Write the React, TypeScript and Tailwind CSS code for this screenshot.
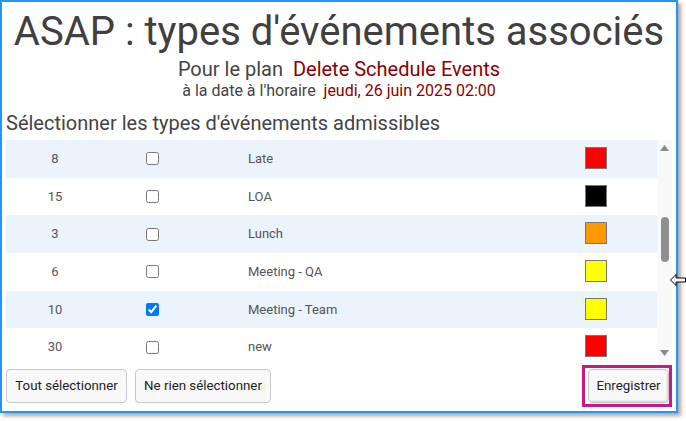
import React from 'react'

const ROWS = [
  { id: 8, name: 'Late', color: '#ff0000', checked: false },
  { id: 15, name: 'LOA', color: '#000000', checked: false },
  { id: 3, name: 'Lunch', color: '#ff9900', checked: false },
  { id: 6, name: 'Meeting - QA', color: '#ffff00', checked: false },
  { id: 10, name: 'Meeting - Team', color: '#ffff00', checked: true },
  { id: 30, name: 'new', color: '#ff0000', checked: false },
]

export default function App() {
  return (
    <div className="relative w-[686px] h-[421px] bg-white overflow-hidden" style={{ fontFamily: 'Roboto, "Liberation Sans", sans-serif' }}>
      <div className="w-[678px] h-[413px] border-2 border-[#2196f3] bg-white shadow-[3px_3px_4px_rgba(0,0,0,0.35)] flex flex-col pt-2 px-1">
        {/* Header */}
        <h1 className="text-[40px] leading-[44px] text-center text-[#404040] whitespace-nowrap">ASAP : types d'événements associés</h1>
        <p className="mt-[3px] text-[20px] leading-[24px] text-center text-[#444] whitespace-nowrap">
          Pour le plan&nbsp; <span className="text-[#8b0000]">Delete Schedule Events</span>
        </p>
        <p className="text-[16px] leading-[20px] text-center text-[#444] whitespace-nowrap">
          à la date à l'horaire&nbsp; <span className="text-[#8b0000]">jeudi, 26 juin 2025 02:00</span>
        </p>
        <h2 className="mt-[10px] text-[20px] leading-[24px] text-[#444] whitespace-nowrap">Sélectionner les types d'événements admissibles</h2>

        {/* Table with scrollbar */}
        <div className="mt-[5px] flex h-[226px]">
          <div className="flex-1 flex flex-col">
            {ROWS.map((r, i) => (
              <div
                key={r.id}
                className={`h-[37.7px] grid grid-cols-[98px_97px_1fr_115px] items-center text-[13px] text-[#555] ${i % 2 === 0 ? 'bg-[#ebf3fc]' : 'bg-white'}`}
              >
                <div className="text-center">{r.id}</div>
                <div className="flex justify-center">
                  <input type="checkbox" defaultChecked={r.checked} className="w-[13px] h-[13px] m-0" />
                </div>
                <div className="pl-[47px]">{r.name}</div>
                <div className="pl-[43px] flex">
                  <div className="w-[22px] h-[22px] border border-[#777] -mt-[2px]" style={{ backgroundColor: r.color }} />
                </div>
              </div>
            ))}
          </div>
          <div className="w-[15px] bg-[#f9f9f9] flex flex-col items-center pt-[5px] pb-[10px]">
            <svg width="9" height="6" viewBox="0 0 9 6"><path d="M4.5 0L9 6H0z" fill="#8a8a8a" /></svg>
            <div className="mt-[66px] w-[8px] h-[45px] rounded-full bg-[#8f8f8f]" />
            <div className="flex-1" />
            <svg width="9" height="6" viewBox="0 0 9 6"><path d="M0 0h9L4.5 6z" fill="#8a8a8a" /></svg>
          </div>
        </div>

        {/* Footer buttons */}
        <div className="mt-[3px] flex items-start">
          <div className="flex gap-2">
            <button className="h-[34px] w-[121px] whitespace-nowrap rounded-[4px] border border-[#c8c8c8] bg-[#f8f8f8] text-[13.3px] text-[#222]">Tout sélectionner</button>
            <button className="h-[34px] w-[136px] whitespace-nowrap rounded-[4px] border border-[#c8c8c8] bg-[#f8f8f8] text-[13.3px] text-[#222]">Ne rien sélectionner</button>
          </div>
          <div className="flex-1" />
          <button className="mr-[3px] h-[34px] w-[81px] whitespace-nowrap rounded-[4px] border border-[#c8c8c8] bg-[#f8f8f8] text-[13.3px] text-[#222] shadow-[inset_-1px_-1px_2px_rgba(0,0,0,0.15)]">Enregistrer</button>
        </div>
      </div>

      {/* Annotation highlight */}
      <div className="absolute left-[582px] top-[365px] w-[90px] h-[42px] border-[3px] border-[#c8188a]" />

      {/* Mouse cursor */}
      <svg className="absolute left-[670px] top-[273px]" width="16" height="14" viewBox="0 0 16 14">
        <path d="M0.5 7L6 1.5V5H15.5V9H6V12.5Z" fill="#fff" stroke="#000" strokeWidth="1" strokeLinejoin="miter" />
      </svg>
    </div>
  )
}
